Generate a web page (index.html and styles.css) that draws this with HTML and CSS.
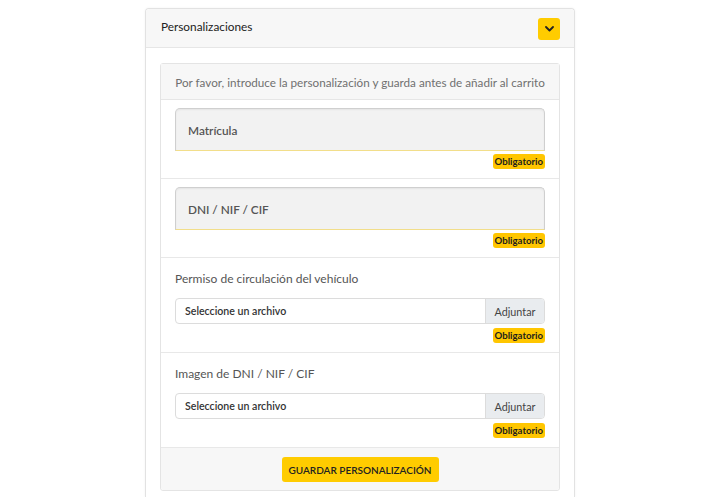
FILE: index.html
```html
<!DOCTYPE html>
<html lang="es">
<head>
<meta charset="utf-8">
<title>Personalizaciones</title>
<link rel="stylesheet" href="styles.css">
</head>
<body>
<div class="card">
  <div class="card-header">
    <span class="card-title">Personalizaciones</span>
    <button class="toggle" aria-label="Contraer">
      <svg width="9" height="6" viewBox="0 0 9 6"><path d="M1 1 L4.5 4.5 L8 1" fill="none" stroke="#222" stroke-width="1.8" stroke-linecap="round" stroke-linejoin="round"/></svg>
    </button>
  </div>
  <div class="card-body">
    <div class="inner">
      <div class="info">Por favor, introduce la personalización y guarda antes de añadir al carrito</div>
      <div class="section">
        <div class="field"><span class="field-label">Matrícula</span></div>
        <div class="badge-row"><span class="badge">Obligatorio</span></div>
      </div>
      <div class="section">
        <div class="field"><span class="field-label">DNI / NIF / CIF</span></div>
        <div class="badge-row"><span class="badge">Obligatorio</span></div>
      </div>
      <div class="section file-section">
        <div class="label">Permiso de circulación del vehículo</div>
        <div class="file">
          <span class="file-text">Seleccione un archivo</span>
          <span class="file-btn">Adjuntar</span>
        </div>
        <div class="badge-row"><span class="badge">Obligatorio</span></div>
      </div>
      <div class="section file-section">
        <div class="label">Imagen de DNI / NIF / CIF</div>
        <div class="file">
          <span class="file-text">Seleccione un archivo</span>
          <span class="file-btn">Adjuntar</span>
        </div>
        <div class="badge-row"><span class="badge">Obligatorio</span></div>
      </div>
      <div class="footer">
        <button class="save">GUARDAR PERSONALIZACIÓN</button>
      </div>
    </div>
  </div>
</div>
</body>
</html>
```
FILE: styles.css
```css
* { box-sizing: border-box; }
html, body { margin: 0; padding: 0; background: #fff; }
body {
  font-family: Lato, "Noto Sans", sans-serif;
  font-size: 12px;
  color: #212529;
}
.card {
  width: 430px;
  margin: 8px auto 0;
  border: 1px solid #e2e2e2;
  border-bottom: none;
  border-radius: 4px 4px 0 0;
  box-shadow: 0 0 3px rgba(0,0,0,0.05);
  height: 489px;
}
.card-header {
  height: 39px;
  background: #f7f7f7;
  border-bottom: 1px solid #e6e6e6;
  display: flex;
  align-items: center;
  justify-content: space-between;
  padding: 0 14px 0 15px;
  border-radius: 4px 4px 0 0;
}
.card-title { font-size: 11.8px; color: #222; margin-top: -3px; }
.toggle {
  width: 22px; height: 22px;
  border: none; border-radius: 3px;
  background: #ffcc00;
  display: flex; align-items: center; justify-content: center;
  padding: 0; margin-top: 1px;
}
.card-body { padding: 15px 14px 0; }
.inner {
  border: 1px solid #e4e4e4;
  border-radius: 3px;
}
.info {
  height: 36px;
  background: #f7f7f7;
  border-bottom: 1px solid #e6e6e6;
  display: flex; align-items: center; justify-content: center;
  color: #707070;
  font-size: 11.7px;
  white-space: nowrap;
}
.section {
  padding: 8px 14px 9px 14px;
  border-bottom: 1px solid #e8e8e8;
}
.file-section { padding-top: 11px; }
.field {
  height: 43px;
  background: #f2f2f2;
  border: 1px solid #cfcfcf;
  border-bottom: 1px solid #f2de8a;
  border-radius: 5px 5px 0 0;
  box-shadow: inset 0 1px 2px rgba(0,0,0,0.06);
  display: flex; align-items: center;
  padding: 2px 12px 0;
}
.field-label { color: #555; font-size: 11.8px; font-weight: 600; }
.badge-row { display: flex; justify-content: flex-end; margin-top: 3px; }
.badge {
  background: #ffc600;
  color: #1d1d1d;
  font-size: 9.6px;
  font-weight: 700;
  height: 15px;
  line-height: 15px;
  padding: 0 2px;
  border-radius: 3px;
}
.label {
  height: 20px; line-height: 20px;
  color: #555; font-size: 12px;
  margin-bottom: 9px;
}
.file {
  height: 26px;
  border: 1px solid #dcdcdc;
  border-radius: 4px;
  display: flex;
  overflow: hidden;
}
.file-text {
  flex: 1;
  display: flex; align-items: center;
  padding-left: 9px;
  font-size: 10.6px; font-weight: 600; color: #333;
}
.file-btn {
  width: 59px;
  background: #e9ecef;
  border-left: 1px solid #dcdcdc;
  display: flex; align-items: center; justify-content: center;
  font-size: 10.8px; color: #444;
}
.file-section .badge-row { margin-top: 4px; }
.footer {
  height: 42px;
  background: #f7f7f7;
  display: flex; align-items: center; justify-content: center;
  border-radius: 0 0 3px 3px;
}
.save {
  width: 157px; height: 25px;
  border: none; border-radius: 3px;
  background: #ffcc00;
  color: #222;
  font-family: inherit;
  font-size: 10px;
  font-weight: 600;
  white-space: nowrap;
  padding: 0;
  margin-top: 1px;
}
```
